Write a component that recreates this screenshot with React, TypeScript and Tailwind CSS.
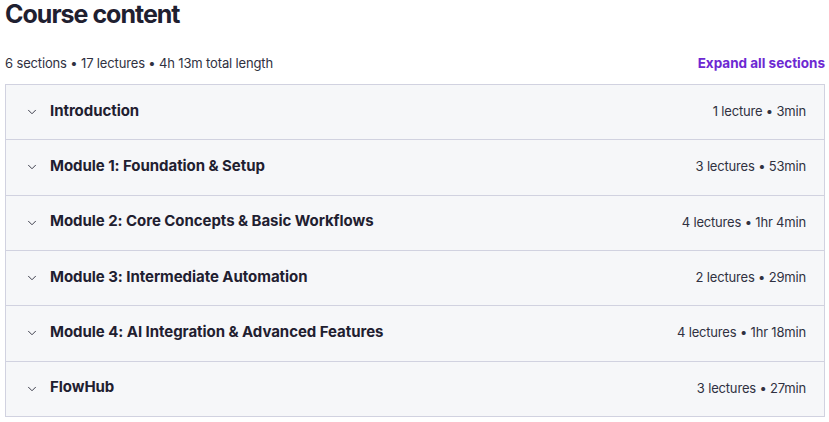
import { ChevronDown } from 'lucide-react';

const sections = [
  { title: 'Introduction', meta: '1 lecture • 3min' },
  { title: 'Module 1: Foundation & Setup', meta: '3 lectures • 53min' },
  { title: 'Module 2: Core Concepts & Basic Workflows', meta: '4 lectures • 1hr 4min' },
  { title: 'Module 3: Intermediate Automation', meta: '2 lectures • 29min' },
  { title: 'Module 4: AI Integration & Advanced Features', meta: '4 lectures • 1hr 18min' },
  { title: 'FlowHub', meta: '3 lectures • 27min' },
];

export default function App() {
  return (
    <div
      className="w-[829px] h-[422px] bg-white pl-[5px] pr-[4px] text-[#1f2030]"
      style={{ fontFamily: 'Inter, "Noto Sans", sans-serif' }}
    >
      <h1 className="text-[25px] leading-[29px] font-bold tracking-[-1px]">Course content</h1>

      <div className="flex items-end justify-between mt-[25px] mb-[12px]">
        <span className="text-[13px] leading-[18px] tracking-[-0.15px] text-[#303141]">
          6 sections • 17 lectures • 4h 13m total length
        </span>
        <button className="text-[13.5px] leading-[18px] font-bold text-[#6d28d2]">Expand all sections</button>
      </div>

      <div className="border-b border-[#d1d2e0]">
        {sections.map((s) => (
          <div
            key={s.title}
            className="h-[55.33px] flex items-center bg-[#f6f7f9] border-t border-x border-[#d1d2e0] pl-[19px] pr-[18px]"
          >
            <ChevronDown className="w-[14px] h-[14px] text-[#303141]" strokeWidth={1.6} />
            <span className="ml-[11px] text-[15px] font-bold leading-[20px] flex-1 -mt-[3px] tracking-[-0.05px]">
              {s.title}
            </span>
            <span className="text-[13px] leading-[18px] -mt-[2px] tracking-[-0.18px] text-[#303141]">{s.meta}</span>
          </div>
        ))}
      </div>
    </div>
  );
}
